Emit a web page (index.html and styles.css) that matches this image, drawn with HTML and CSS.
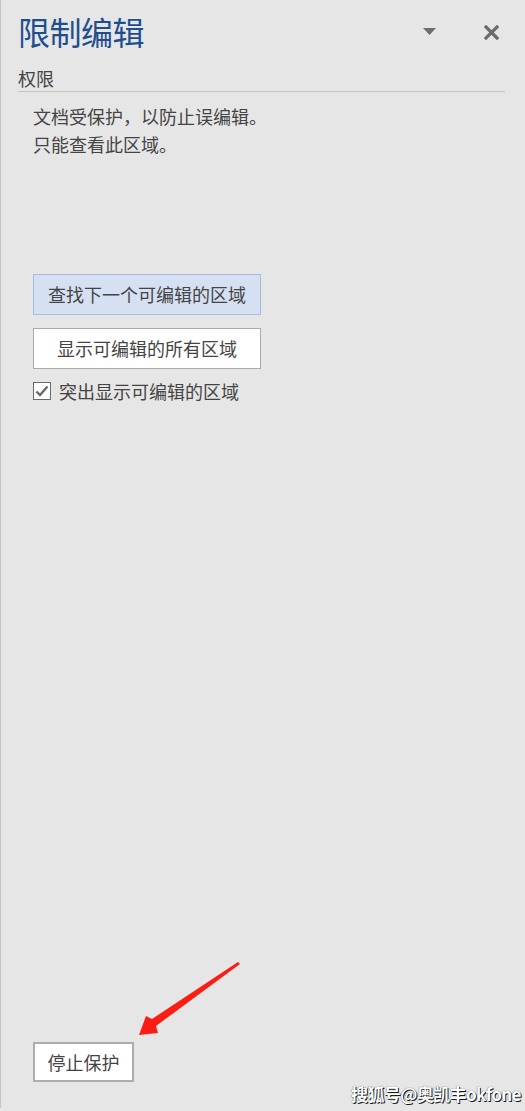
FILE: index.html
```html
<!DOCTYPE html>
<html lang="zh-CN">
<head>
<meta charset="utf-8">
<link rel="stylesheet" href="styles.css">
</head>
<body>
<div class="panel">
  <div class="header">
    <h1 class="title">限制编辑</h1>
    <div class="tools">
      <svg class="drop" width="14" height="8" viewBox="0 0 14 8"><path d="M0 0H13L6.5 7Z" fill="#6e6e6e"/></svg>
      <svg class="close" width="15" height="15" viewBox="0 0 15 15"><path d="M2 2L13 13M13 2L2 13" stroke="#6b6b6b" stroke-width="3.2" stroke-linecap="square"/></svg>
    </div>
  </div>
  <div class="section">权限</div>
  <div class="desc">
    <p>文档受保护，以防止误编辑。</p>
    <p>只能查看此区域。</p>
  </div>
  <div class="actions">
    <button class="btn btn-active">查找下一个可编辑的区域</button>
    <button class="btn">显示可编辑的所有区域</button>
    <label class="check">
      <span class="box"><svg width="14" height="12" viewBox="0 0 14 12"><path d="M1.5 6.5L5 10L12.5 1.5" fill="none" stroke="#6a6a6a" stroke-width="2.4"/></svg></span>
      <span>突出显示可编辑的区域</span>
    </label>
  </div>
  <div class="footer">
    <button class="btn btn-stop">停止保护</button>
  </div>
  <svg class="arrow" width="110" height="80" viewBox="0 0 110 80"><path d="M0 73L7 54L13 57L99 0L101 2L17 64L19 71Z" fill="#fb1d14"/></svg>
  <div class="mark">搜狐号@奥凯丰okfone</div>
</div>
</body>
</html>
```

FILE: styles.css
```css
html, body {
  margin: 0;
  padding: 0;
  background: #e6e6e6;
}
body {
  font-family: "Noto Sans CJK SC", "Noto Sans", sans-serif;
  color: #444444;
}
.panel {
  position: relative;
  box-sizing: border-box;
  height: 1108px;
  border-left: 1px solid #c4c4c4;
  padding: 11px 20px 26px 17px;
  display: flex;
  flex-direction: column;
}
.header {
  display: flex;
  align-items: center;
  justify-content: space-between;
  height: 40px;
}
.title {
  margin: 0;
  font-size: 32px;
  font-weight: normal;
  line-height: 40px;
  color: #1f4e8e;
  letter-spacing: -0.5px;
}
.tools {
  display: flex;
  align-items: center;
  gap: 47px;
  padding-right: 6px;
  margin-top: 3px;
}
.drop { margin-top: -1px; }
.section {
  margin-top: 15px;
  font-size: 18px;
  line-height: 24px;
  padding-bottom: 1px;
  border-bottom: 1px solid #c6c6c6;
}
.desc {
  margin-top: 10px;
  padding-left: 15px;
  font-size: 18px;
  line-height: 28px;
}
.desc p { margin: 0; }
.actions {
  margin-top: 116px;
  padding-left: 15px;
  display: flex;
  flex-direction: column;
  align-items: flex-start;
}
.btn {
  font-family: inherit;
  font-size: 18px;
  color: #444444;
  background: #ffffff;
  border: 1px solid #ababab;
  width: 228px;
  height: 41px;
  padding: 0;
  line-height: 39px;
  box-sizing: border-box;
}
.btn-active {
  background: #d5e1f2;
  border-color: #a3bde3;
}
.actions .btn + .btn { margin-top: 13px; }
.check {
  margin-top: 12px;
  display: flex;
  align-items: center;
  gap: 8px;
  font-size: 18px;
  line-height: 20px;
}
.box {
  width: 18px;
  height: 18px;
  box-sizing: border-box;
  border: 1px solid #6a6a6a;
  background: #ffffff;
  display: flex;
  align-items: center;
  justify-content: center;
}
.footer {
  margin-top: auto;
  padding-left: 15px;
}
.btn-stop {
  width: 101px;
  height: 40px;
  border: 2px solid #adadad;
  line-height: 36px;
}
.arrow {
  position: absolute;
  left: 138px;
  top: 962px;
}
.mark {
  position: absolute;
  left: 350px;
  top: 1081px;
  font-size: 17px;
  font-weight: bold;
  color: #ffffff;
  letter-spacing: -0.6px;
  text-shadow: 1px 1px 0 #1a1a1a, 0 0 1px #333;
}
```
